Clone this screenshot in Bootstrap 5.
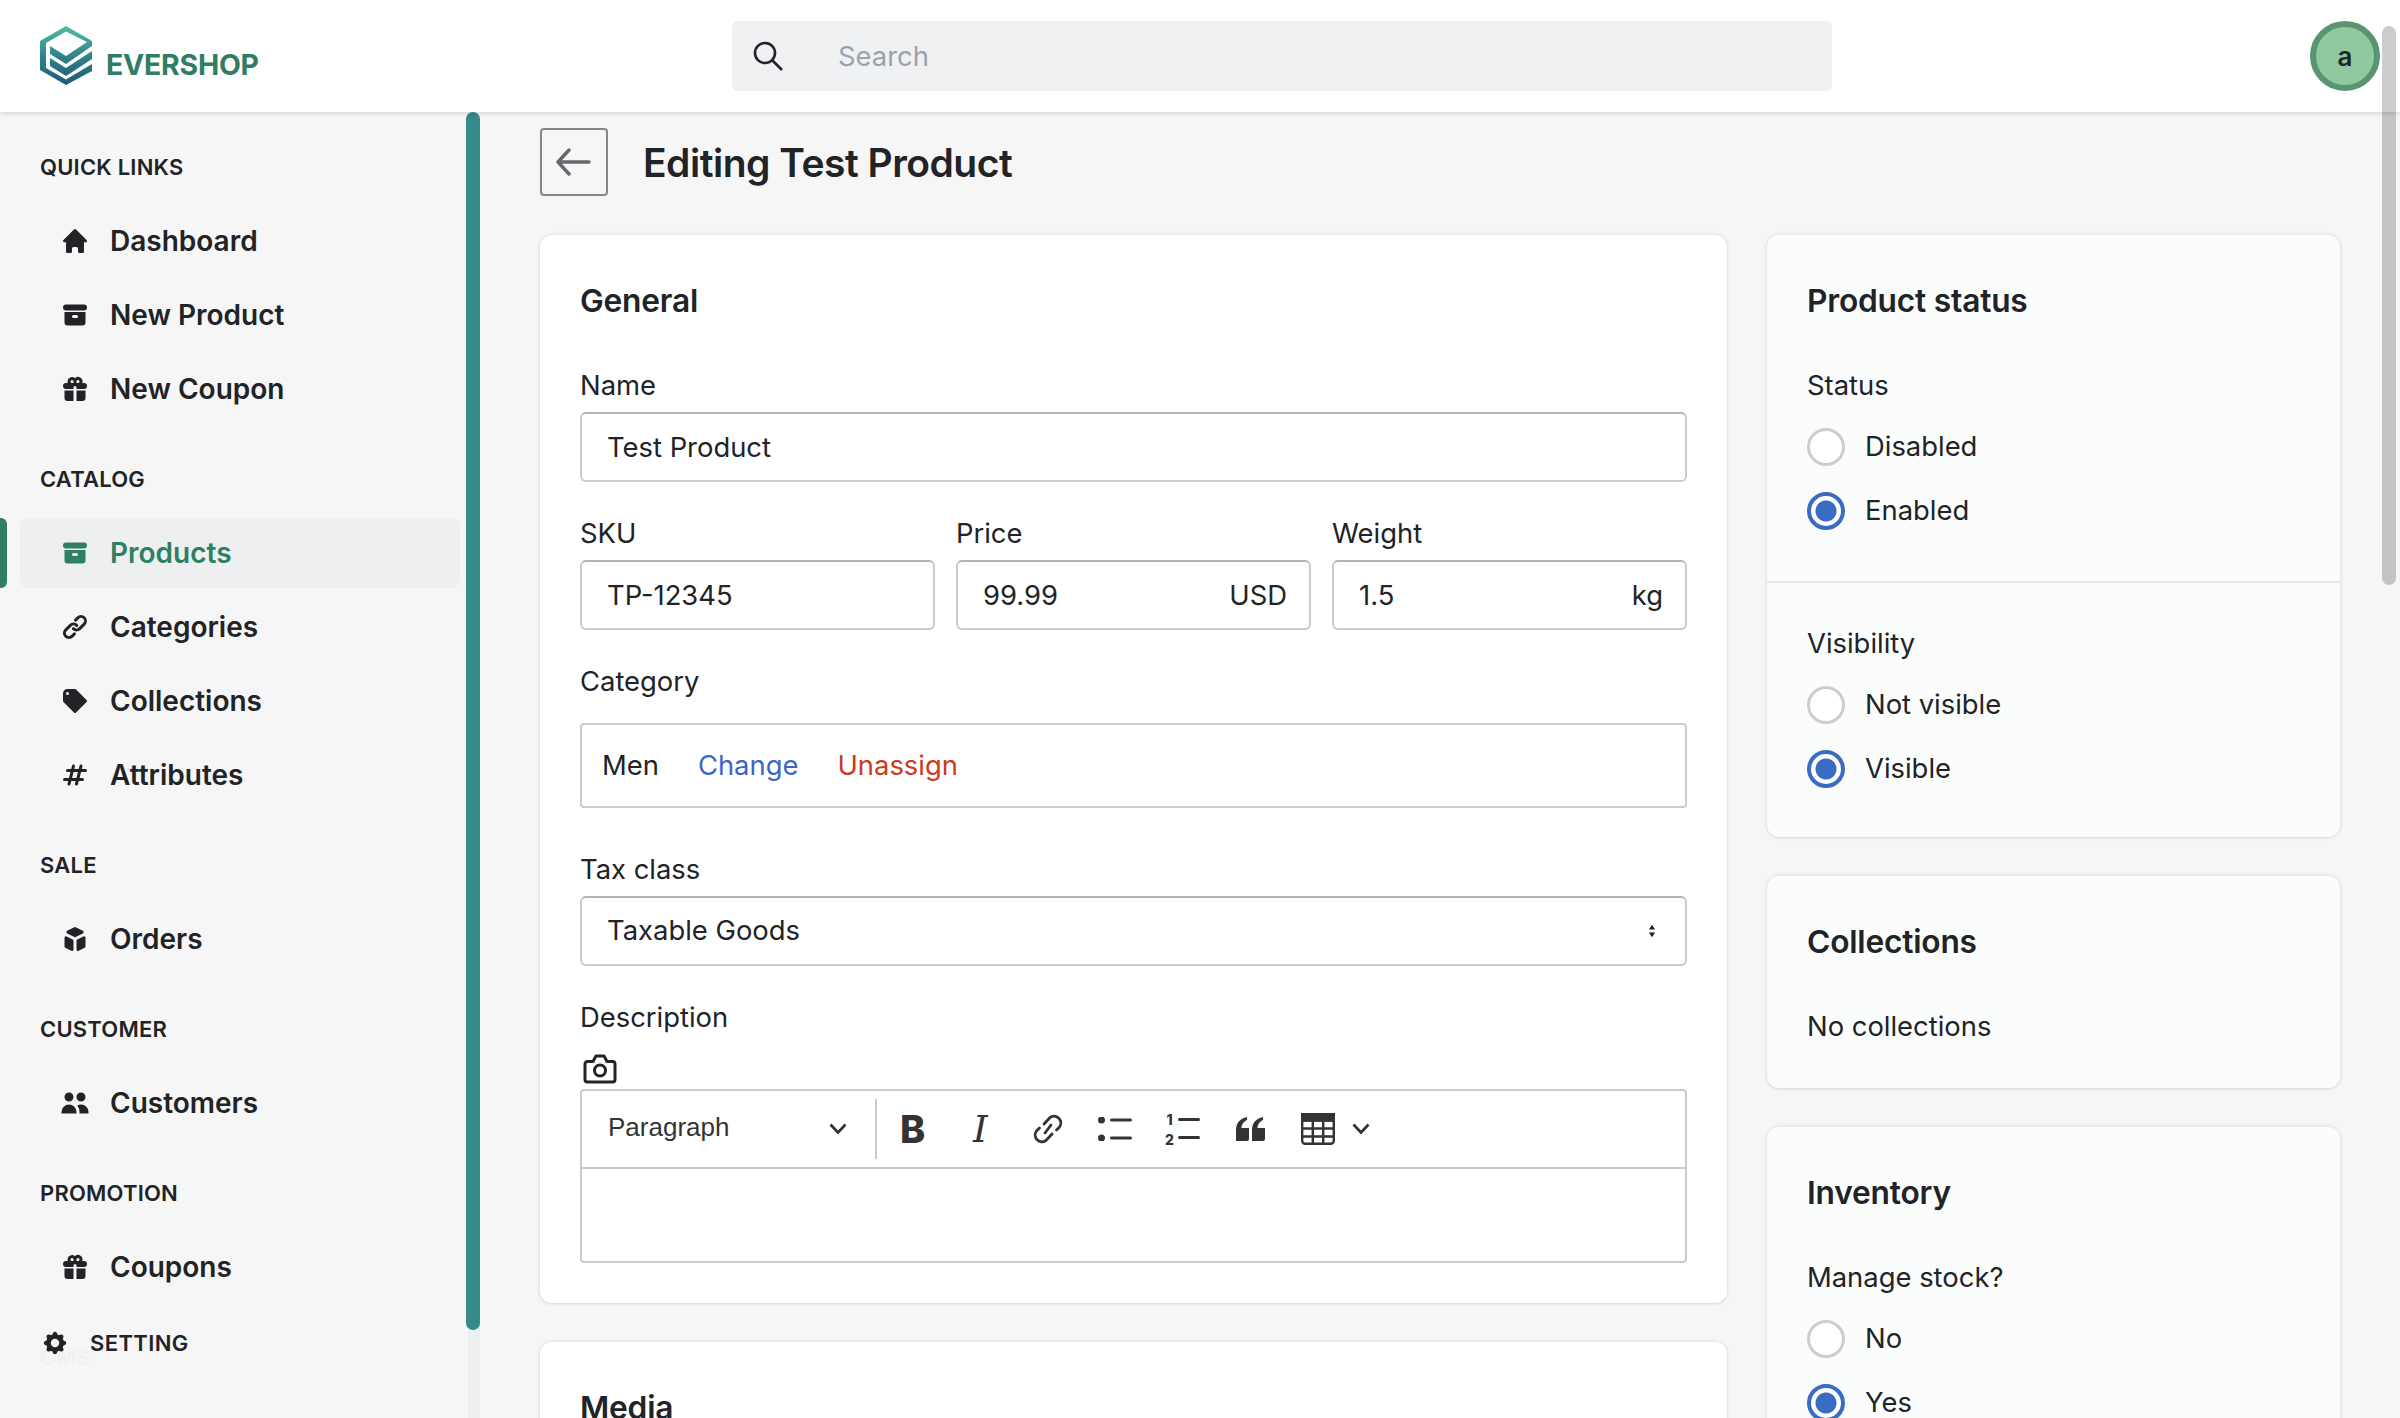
<!DOCTYPE html>
<html lang="en">
<head>
  <meta charset="UTF-8" />
  <meta name="viewport" content="width=device-width, initial-scale=1.0"/>
  <title>Editing Test Product</title>
  <link href="https://cdn.jsdelivr.net/npm/bootstrap@5.3.0/dist/css/bootstrap.min.css" rel="stylesheet" />
  <style>
    html, body { height: 100%; overflow: hidden; }
    body { font-family: Inter, "Liberation Sans", sans-serif; font-size: 27.4px; color: #212326; background: #f6f6f6; }
    svg { display: block; flex: none; }

    .top-bar { height: 112px; background: #fff; box-shadow: 0 2px 5px rgba(0,0,0,.12); position: relative; z-index: 3; }
    .logo-box { width: 732px; padding-left: 40px; }
    .logo-word { font-size: 28.4px; font-weight: 700; color: #2f7d62; margin: 18px 0 0 14px; letter-spacing: -.2px; }
    .search-box { width: 1100px; height: 70px; background: #f0f1f3; border-radius: 6px; padding-left: 20px; }
    .search-box span { color: #9ca2ad; font-size: 27.4px; margin-left: 54px; padding-top: 2px; }
    .avatar { width: 70px; height: 70px; border-radius: 50%; border: 6px solid #5b9470; background: #90c8a0; font-size: 26px; font-weight: 600; margin-left: auto; margin-right: 20px; }
    .page-thumb { position: absolute; z-index: 4; top: 26px; left: 2382px; width: 14px; height: 559px; border-radius: 7px; background: rgba(0,0,0,.2); }

    .shell { height: 1306px; }
    .side-bar { width: 480px; flex: none; position: relative; overflow: hidden; background: #f6f6f6; padding-top: 38px; }
    .side-thumb { position: absolute; top: 0; left: 466px; width: 14px; height: 1218px; background: #358a8a; border-radius: 7px; z-index: 2; }
    .side-track { position: absolute; top: 1200px; bottom: 0; left: 468px; width: 12px; background: #eceef0; }
    .side-head { font-size: 22px; font-weight: 600; line-height: 34px; margin: 0 0 22px 40px; letter-spacing: .2px; }
    .side-group { margin-bottom: 38px; }
    .side-link { height: 70px; margin: 0 20px 4px 20px; padding-left: 40px; border-radius: 8px; font-size: 28px; font-weight: 600; color: #212326; text-decoration: none; position: relative; }
    .side-link svg { width: 30px; height: 30px; margin-right: 20px; fill: currentColor; }
    .side-link.on { background: #eeeff1; color: #2f8062; }
    .side-link.on::before { content: ""; position: absolute; left: -20px; top: 0; bottom: 0; width: 7px; background: #2f8062; border-radius: 0 6px 6px 0; }
    .side-faint { font-size: 22px; font-weight: 600; margin-left: 40px; color: #f1f1f1; line-height: 34px; }
    .side-setting { position: absolute; left: 0; right: 14px; top: 1194px; height: 74px; padding-left: 41px; font-size: 22px; font-weight: 600; letter-spacing: .4px; }
    .side-setting svg { width: 28px; height: 28px; margin-right: 21px; fill: currentColor; }

    .main-pane { flex: 1; padding: 16px 60px 0; overflow: hidden; }
    .back-btn { width: 68px; height: 68px; border: 2px solid #85878c; border-radius: 4px; background: none; padding: 0; margin-right: 35px; }
    .page-title { font-size: 39px; font-weight: 600; margin: 0; padding-top: 2px; letter-spacing: -.5px; }
    .edit-grid { display: grid; grid-template-columns: 1187px 573px; gap: 40px; margin-top: 39px; align-items: start; }
    .stack { display: flex; flex-direction: column; gap: 39px; }
    .panel { background: #fff; border: 0; border-radius: 12px; box-shadow: 0 0 4px rgba(0,0,0,.13), 0 1px 2px rgba(0,0,0,.05); }
    .panel.tint { background: #fbfdfd; }
    .panel-part { padding: 42px 40px 40px; }
    .panel-part.status-part { padding-bottom: 22px; }
    .panel-part.coll-part { padding-bottom: 42px; }
    .panel-part.vis-part { padding: 40px 40px 36px; }
    .panel-title { font-size: 31.7px; font-weight: 600; line-height: 48px; margin: 0 0 40px; letter-spacing: -.2px; }
    .field-label { display: block; line-height: 40px; margin: 0 0 7px; }
    .field-gap { margin-bottom: 31px; }
    .field-gap.wide-gap { margin-bottom: 41px; }
    .radio-label { margin-bottom: 10px; }
    .form-control.plain, .form-select.plain { height: 70px; font-size: 27.4px; color: #212326; border: 2px solid #c9cbd0; border-top-color: #b0b3b8; border-radius: 6px; padding: 0 25px; box-shadow: none; background-color: #fff; }
    .form-select.plain { background-image: url("data:image/svg+xml,%3csvg xmlns='http://www.w3.org/2000/svg' viewBox='0 0 10 20'%3e%3cpath fill='%23212326' d='M5 1l4.500 7H.5zM5 19L.5 12h9z'/%3e%3c/svg%3e"); background-size: 8px 14px; background-position: right 29px center; }
    .unit-box { position: relative; }
    .unit-box span { position: absolute; right: 24px; top: 15px; line-height: 40px; }
    .three-up { display: grid; grid-template-columns: repeat(3, 1fr); gap: 21px; }
    .cat-box { height: 85px; margin-top: 22px; border: 2px solid #c9cbd0; border-radius: 4px; padding-left: 20px; gap: 39px; }
    .cat-box a { text-decoration: none; }
    .cat-change { color: #3b66c4; }
    .cat-drop { color: #cc3a22; }
    .camera-row { height: 32px; margin: 17px 0 3px; padding-left: 3px; }
    .editor-box { border: 2px solid #c9cbd0; border-radius: 4px; height: 174px; }
    .editor-tools { height: 78px; border-bottom: 2px solid #c9cbd0; }
    .para-pick { width: 293px; padding: 0 0 3px 26px; font-family: "Liberation Sans", sans-serif; font-size: 26px; color: #333; }
    .para-pick svg { margin: 3px 28px 0 auto; }
    .tool-sep { width: 2px; height: 60px; background: #c9cbd0; margin-right: 2px; }
    .tool-slot { width: 67.5px; color: #333; }
    .tool-b { font-size: 38px; font-weight: 800; line-height: 1; }
    .tool-i { font-family: "DejaVu Serif", "Liberation Serif", serif; font-style: italic; font-size: 37px; line-height: 1; }
    .radio-row { height: 64px; gap: 20px; margin: 0; }
    .radio-mark { width: 38px; height: 38px; margin: 0; border: 3px solid #cbcdd0; background-color: #fff; flex: none; }
    .radio-mark:checked { border: 4px solid #3b6cc4; background-color: #fff; background-image: radial-gradient(circle, #3b6cc4 0 10px, #fff 11px); }
    .radio-mark:focus { box-shadow: none; }
    .part-line { border-top: 2px solid #e4e6e8; }
    .media-space { height: 300px; }
  </style>
</head>
<body>
  <div class="page-thumb"></div>
  <header class="top-bar d-flex align-items-center">
    <div class="logo-box d-flex align-items-center">
      <svg width="52" height="59" viewBox="0 0 52 59">
        <defs>
          <linearGradient id="logoFill" x1="0" y1="0" x2="0" y2="1">
            <stop offset="0" stop-color="#52bba5"/>
            <stop offset=".55" stop-color="#2f7f86"/>
            <stop offset="1" stop-color="#1d5a78"/>
          </linearGradient>
        </defs>
        <path fill="url(#logoFill)" d="M26 0 52 15V20L26 38 10 28V20L26 30 47 16 26 5.500 6 17V42L26 53.500 52 38V45L26 59 0 44V15ZM10 32 26 42 52 25V33L26 50 10 40Z"/>
      </svg>
      <span class="logo-word">EVERSHOP</span>
    </div>
    <div class="search-box d-flex align-items-center">
      <svg width="32" height="32" viewBox="0 0 32 32" fill="none" stroke="#212326" stroke-width="2.6"><circle cx="13" cy="13" r="10"/><path d="M20.5 20.5 30 30"/></svg>
      <span>Search</span>
    </div>
    <div class="avatar d-flex align-items-center justify-content-center">a</div>
  </header>

  <div class="shell d-flex">
    <aside class="side-bar" id="sideBar">
      <div class="side-track"></div>
      <div class="side-thumb"></div>
    </aside>

    <main class="main-pane">
      <div class="d-flex align-items-center">
        <button class="back-btn d-flex align-items-center justify-content-center" type="button">
          <svg width="36" height="28" viewBox="0 0 36 28" fill="none" stroke="#65676c" stroke-width="3.4" stroke-linecap="round" stroke-linejoin="round"><path d="M2 14H33M13 2 2 14 13 26"/></svg>
        </button>
        <h1 class="page-title">Editing Test Product</h1>
      </div>

      <div class="edit-grid">
        <div class="stack">
          <section class="panel panel-part">
            <h2 class="panel-title">General</h2>
            <div class="field-gap">
              <label class="field-label">Name</label>
              <input class="form-control plain" value="Test Product">
            </div>
            <div class="three-up field-gap">
              <div>
                <label class="field-label">SKU</label>
                <input class="form-control plain" value="TP-12345">
              </div>
              <div>
                <label class="field-label">Price</label>
                <div class="unit-box"><input class="form-control plain" value="99.99"><span>USD</span></div>
              </div>
              <div>
                <label class="field-label">Weight</label>
                <div class="unit-box"><input class="form-control plain" value="1.5"><span>kg</span></div>
              </div>
            </div>
            <div class="field-gap wide-gap">
              <label class="field-label">Category</label>
              <div class="cat-box d-flex align-items-center">
                <span>Men</span><a class="cat-change" href="#">Change</a><a class="cat-drop" href="#">Unassign</a>
              </div>
            </div>
            <div class="field-gap">
              <label class="field-label">Tax class</label>
              <select class="form-select plain"><option>Taxable Goods</option></select>
            </div>
            <label class="field-label mb-0">Description</label>
            <div class="camera-row">
              <svg width="34" height="30" viewBox="0 0 34 30" fill="none" stroke="#212326" stroke-width="3" stroke-linejoin="round"><path d="M2 10a2.500 2.500 0 0 1 2.500-2.500h5.500l3-5.500h8l3 5.500h5.500a2.500 2.500 0 0 1 2.500 2.500v15.500a2.500 2.500 0 0 1-2.500 2.500H4.500a2.500 2.500 0 0 1-2.500-2.500Z"/><circle cx="17" cy="16.500" r="5.500"/></svg>
            </div>
            <div class="editor-box">
              <div class="editor-tools d-flex align-items-center">
                <div class="para-pick d-flex align-items-center">Paragraph
                  <svg width="18" height="12" viewBox="0 0 18 12" fill="none" stroke="#333" stroke-width="2.6"><path d="M1.500 1.500 9 9.500 16.500 1.500"/></svg>
                </div>
                <div class="tool-sep"></div>
                <div class="tool-slot d-flex justify-content-center"><span class="tool-b">B</span></div>
                <div class="tool-slot d-flex justify-content-center"><span class="tool-i">I</span></div>
                <div class="tool-slot d-flex justify-content-center">
                  <svg width="30" height="32" viewBox="0 0 30 32" fill="none" stroke="#333" stroke-width="2.800" stroke-linecap="round"><path d="M11 11 17 4.500a6.800 6.800 0 0 1 9.500 9.500L23.500 17M19 21 13 27.500a6.800 6.800 0 0 1-9.500-9.500L6.500 15M12 20 18 12"/></svg>
                </div>
                <div class="tool-slot d-flex justify-content-center">
                  <svg width="34" height="24" viewBox="0 0 34 24" fill="#333"><circle cx="3.500" cy="3" r="3.500"/><circle cx="3.500" cy="21" r="3.500"/><rect x="12" y="1.500" width="22" height="3" rx="1.500"/><rect x="12" y="19.500" width="22" height="3" rx="1.500"/></svg>
                </div>
                <div class="tool-slot d-flex justify-content-center">
                  <svg width="35" height="39" viewBox="0 -3 35 39" fill="#333" font-family="Inter, sans-serif" font-size="14" font-weight="800"><text x="1.500" y="12">1</text><text x="0" y="32">2</text><rect x="13" y="5" width="22" height="3" rx="1.500"/><rect x="13" y="23" width="22" height="3" rx="1.500"/></svg>
                </div>
                <div class="tool-slot d-flex justify-content-center">
                  <svg width="29" height="24" viewBox="0 0 29 24" fill="#333"><path d="M0 24V13C0 6 4 1.500 11 0V3C7 5 5.500 8 5.500 11H13V22a2 2 0 0 1-2 2ZM16 24V13C16 6 20 1.500 27 0V3C23 5 21.500 8 21.500 11H29V22a2 2 0 0 1-2 2Z"/></svg>
                </div>
                <div class="tool-slot d-flex justify-content-center">
                  <svg width="34" height="32" viewBox="0 0 34 32" fill="none" stroke="#333" stroke-width="2.400"><rect x="1.200" y="1.200" width="31.600" height="29.600" rx="3"/><rect x="1.200" y="1.200" width="31.600" height="6.500" fill="#333"/><path d="M11.800 7V31M22.200 7V31M1 15.500H33M1 23.500H33"/></svg>
                </div>
                <svg width="18" height="12" viewBox="0 0 18 12" fill="none" stroke="#333" stroke-width="2.600"><path d="M1.500 1.500 9 9.500 16.500 1.500"/></svg>
              </div>
            </div>
          </section>
          <section class="panel panel-part">
            <h2 class="panel-title">Media</h2>
            <div class="media-space"></div>
          </section>
        </div>

        <div class="stack">
          <section class="panel tint">
            <div class="panel-part status-part">
              <h2 class="panel-title">Product status</h2>
              <label class="field-label radio-label">Status</label>
              <label class="radio-row d-flex align-items-center"><input class="form-check-input radio-mark" type="radio" name="st">Disabled</label>
              <label class="radio-row d-flex align-items-center mb-3"><input class="form-check-input radio-mark" type="radio" name="st" checked>Enabled</label>
            </div>
            <div class="panel-part vis-part part-line">
              <label class="field-label radio-label">Visibility</label>
              <label class="radio-row d-flex align-items-center"><input class="form-check-input radio-mark" type="radio" name="vi">Not visible</label>
              <label class="radio-row d-flex align-items-center"><input class="form-check-input radio-mark" type="radio" name="vi" checked>Visible</label>
            </div>
          </section>
          <section class="panel tint panel-part coll-part">
            <h2 class="panel-title">Collections</h2>
            <div class="field-label mb-0">No collections</div>
          </section>
          <section class="panel tint panel-part">
            <h2 class="panel-title">Inventory</h2>
            <label class="field-label radio-label">Manage stock?</label>
            <label class="radio-row d-flex align-items-center"><input class="form-check-input radio-mark" type="radio" name="ms">No</label>
            <label class="radio-row d-flex align-items-center"><input class="form-check-input radio-mark" type="radio" name="ms" checked>Yes</label>
          </section>
        </div>
      </div>
    </main>
  </div>

  <script>
    const icons = {
      home: '<path d="M10.707 2.293a1 1 0 00-1.414 0l-7 7a1 1 0 001.414 1.414L4 10.414V17a1 1 0 001 1h2a1 1 0 001-1v-2a1 1 0 011-1h2a1 1 0 011 1v2a1 1 0 001 1h2a1 1 0 001-1v-6.586l.293.293a1 1 0 001.414-1.414l-7-7z"/>',
      archive: '<path d="M4 3a2 2 0 100 4h12a2 2 0 100-4H4z"/><path fill-rule="evenodd" d="M3 8h14v7a2 2 0 01-2 2H5a2 2 0 01-2-2V8zm5 3a1 1 0 011-1h2a1 1 0 110 2H9a1 1 0 01-1-1z"/>',
      gift: '<path fill-rule="evenodd" d="M5 5a3 3 0 015-2.236A3 3 0 0114.83 6H16a2 2 0 110 4h-5V9a1 1 0 10-2 0v1H4a2 2 0 110-4h1.17C5.06 5.687 5 5.35 5 5zm4 1V5a1 1 0 10-1 1h1zm3 0a1 1 0 10-1-1v1h1z"/><path d="M9 11H3v5a2 2 0 002 2h4v-7zM11 18h4a2 2 0 002-2v-5h-6v7z"/>',
      link: '<path fill-rule="evenodd" d="M12.586 4.586a2 2 0 112.828 2.828l-3 3a2 2 0 01-2.828 0 1 1 0 00-1.414 1.414 4 4 0 005.656 0l3-3a4 4 0 00-5.656-5.656l-1.5 1.5a1 1 0 101.414 1.414l1.5-1.5zm-5 5a2 2 0 012.828 0 1 1 0 101.414-1.414 4 4 0 00-5.656 0l-3 3a4 4 0 105.656 5.656l1.5-1.5a1 1 0 10-1.414-1.414l-1.5 1.5a2 2 0 11-2.828-2.828l3-3z"/>',
      tag: '<path fill-rule="evenodd" d="M17.707 9.293a1 1 0 010 1.414l-7 7a1 1 0 01-1.414 0l-7-7A.997.997 0 012 10V5a3 3 0 013-3h5c.256 0 .512.098.707.293l7 7zM5 6a1 1 0 100-2 1 1 0 000 2z"/>',
      hash: '<path fill-rule="evenodd" d="M9.243 3.03a1 1 0 01.727 1.213L9.53 6h2.94l.56-2.243a1 1 0 111.94.486L14.53 6H17a1 1 0 110 2h-2.97l-1 4H15a1 1 0 110 2h-2.47l-.56 2.242a1 1 0 11-1.94-.485L10.47 14H7.53l-.56 2.242a1 1 0 11-1.94-.485L5.47 14H3a1 1 0 110-2h2.97l1-4H5a1 1 0 110-2h2.47l.56-2.243a1 1 0 011.213-.727zM9.03 8l-1 4h2.938l1-4H9.031z"/>',
      cube: '<path d="M11 17a1 1 0 001.447.894l4-2A1 1 0 0017 15V9.236a1 1 0 00-1.447-.894l-4 2a1 1 0 00-.553.894V17zM15.211 6.276a1 1 0 000-1.788l-4.764-2.382a1 1 0 00-.894 0L4.789 4.488a1 1 0 000 1.788l4.764 2.382a1 1 0 00.894 0l4.764-2.382zM4.447 8.342A1 1 0 003 9.236V15a1 1 0 00.553.894l4 2A1 1 0 009 17v-5.764a1 1 0 00-.553-.894l-4-2z"/>',
      users: '<path d="M9 6a3 3 0 11-6 0 3 3 0 016 0zM17 6a3 3 0 11-6 0 3 3 0 016 0zM12.930 17c.046-.327.07-.66.07-1a6.970 6.970 0 00-1.500-4.330A5 5 0 0119 16v1h-6.070zM6 11a5 5 0 015 5v1H1v-1a5 5 0 015-5z"/>',
      cog: '<path fill-rule="evenodd" d="M11.490 3.170c-.38-1.560-2.600-1.560-2.980 0a1.532 1.532 0 01-2.286.948c-1.372-.836-2.942.734-2.106 2.106.54.886.061 2.042-.947 2.287-1.561.379-1.561 2.600 0 2.978a1.532 1.532 0 01.947 2.287c-.836 1.372.734 2.942 2.106 2.106a1.532 1.532 0 012.287.947c.379 1.561 2.600 1.561 2.978 0a1.533 1.533 0 012.287-.947c1.372.836 2.942-.734 2.106-2.106a1.533 1.533 0 01.947-2.287c1.561-.379 1.561-2.600 0-2.978a1.532 1.532 0 01-.947-2.287c.836-1.372-.734-2.942-2.106-2.106a1.532 1.532 0 01-2.287-.947zM10 13a3 3 0 100-6 3 3 0 000 6z"/>'
    };
    const menu = [
      { head: "QUICK LINKS", items: [["home", "Dashboard"], ["archive", "New Product"], ["gift", "New Coupon"]] },
      { head: "CATALOG", items: [["archive", "Products", true], ["link", "Categories"], ["tag", "Collections"], ["hash", "Attributes"]] },
      { head: "SALE", items: [["cube", "Orders"]] },
      { head: "CUSTOMER", items: [["users", "Customers"]] },
      { head: "PROMOTION", items: [["gift", "Coupons"]] }
    ];
    const side = document.getElementById("sideBar");
    menu.forEach(group => {
      const box = document.createElement("div");
      box.className = "side-group";
      box.innerHTML = `<div class="side-head">${group.head}</div>` + group.items.map(i =>
        `<a href="#" class="side-link d-flex align-items-center${i[2] ? " on" : ""}"><svg viewBox="0 0 20 20">${icons[i[0]]}</svg>${i[1]}</a>`).join("");
      side.appendChild(box);
    });
    side.insertAdjacentHTML("beforeend",
      `<div class="side-faint">CMS</div><div class="side-setting d-flex align-items-center"><svg viewBox="0 0 20 20">${icons.cog}</svg>SETTING</div>`);
  </script>
  <script src="https://cdn.jsdelivr.net/npm/bootstrap@5.3.0/dist/js/bootstrap.bundle.min.js"></script>
</body>
</html>
